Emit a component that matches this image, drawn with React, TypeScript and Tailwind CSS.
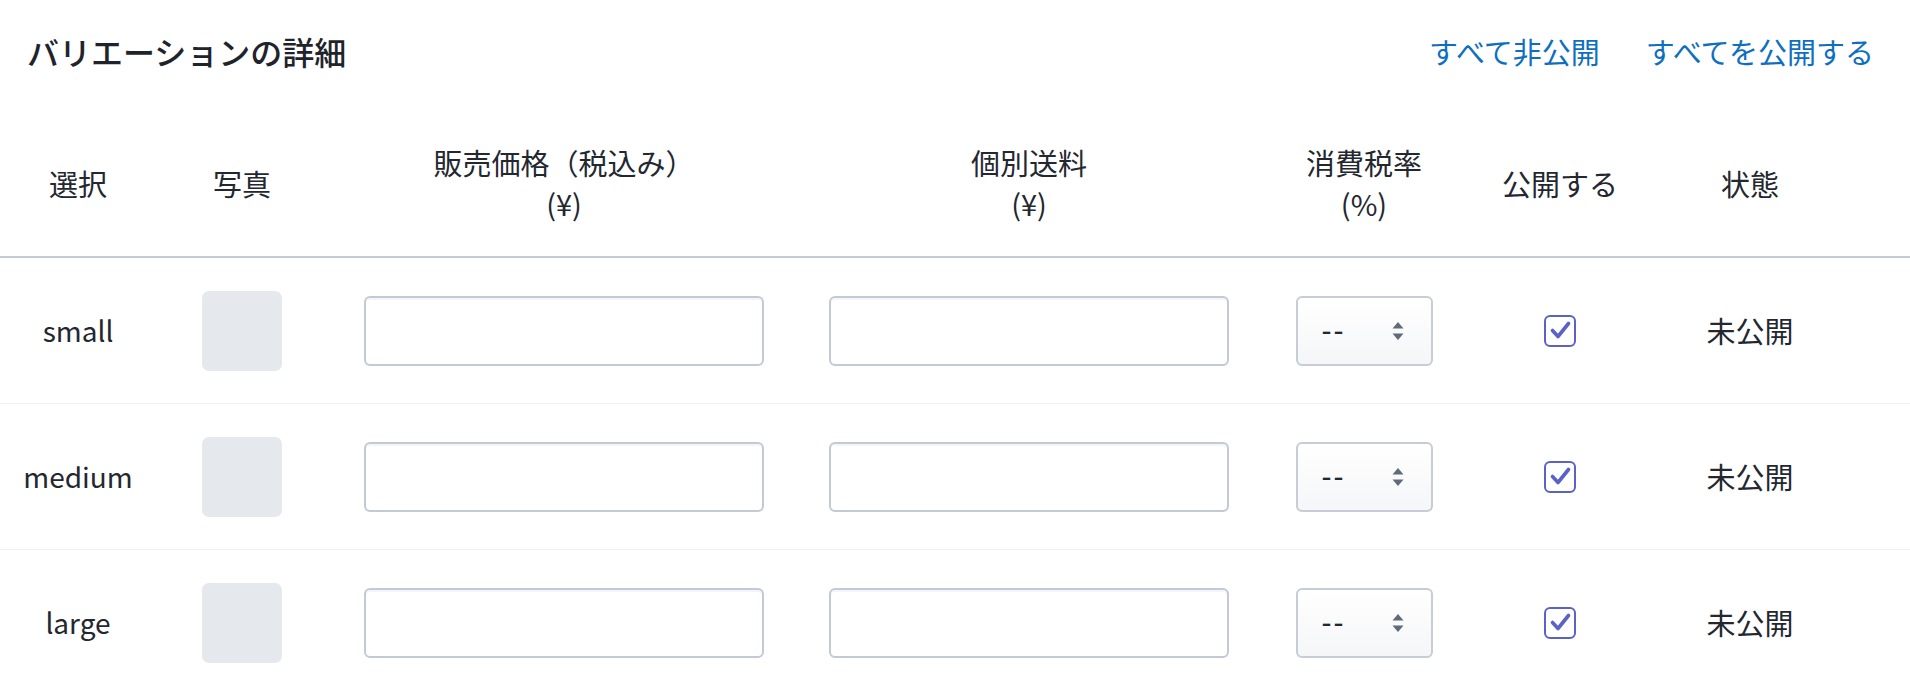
import React from 'react';

const variants = ['small', 'medium', 'large'];

const cols = {
  select: 'w-[156px]',
  photo: 'w-[172px]',
  price: 'w-[472px]',
  shipping: 'w-[458px]',
  tax: 'w-[212px]',
  publish: 'w-[180px]',
  status: 'w-[200px]',
};

const CheckIcon: React.FC = () => (
  <span className="flex h-[32px] w-[32px] items-center justify-center rounded-[6px] border-[2.5px] border-[#5a62c8] bg-white">
    <svg width="27" height="27" viewBox="0 0 27 27" fill="none">
      <path
        d="M5.5 13.5 L11 19.5 L21.5 6.5"
        stroke="#5a62c8"
        strokeWidth="3.6"
        strokeLinecap="round"
        strokeLinejoin="round"
      />
    </svg>
  </span>
);

const TaxSelect: React.FC = () => (
  <div className="flex h-[70px] w-[137px] items-center justify-between rounded-[6px] border-2 border-[#c6cdd7] bg-gradient-to-b from-white to-[#f5f6f8] pl-[24px] pr-[26px]">
    <span
      className="text-[30px] leading-none tracking-[2px] text-[#23272f]"
      style={{ fontFamily: '"Liberation Sans", sans-serif' }}
    >
      --
    </span>
    <svg width="14" height="20" viewBox="0 0 14 20">
      <path d="M7 1 L12.5 7.5 L1.5 7.5 Z" fill="#5f6b7a" />
      <path d="M1.5 12.5 L12.5 12.5 L7 19 Z" fill="#5f6b7a" />
    </svg>
  </div>
);

const TextBox: React.FC = () => (
  <input
    type="text"
    className="h-[70px] w-[400px] rounded-[6px] border-2 border-[#c3cad5] bg-white px-4 text-[28px] shadow-[inset_0_2px_0_#f3f5f8] outline-none"
  />
);

const VariantRow: React.FC<{ name: string }> = ({ name }) => (
  <div className="flex h-[146px] items-center border-b border-[#eef0f2]">
    <div className={`${cols.select} text-center text-[28px]`}>{name}</div>
    <div className={`${cols.photo} flex justify-center`}>
      <div className="h-[80px] w-[80px] rounded-[7px] bg-[#e5e8ec]" />
    </div>
    <div className={`${cols.price} flex justify-center`}>
      <TextBox />
    </div>
    <div className={`${cols.shipping} flex justify-center`}>
      <TextBox />
    </div>
    <div className={`${cols.tax} flex justify-center`}>
      <TaxSelect />
    </div>
    <div className={`${cols.publish} flex justify-center`}>
      <CheckIcon />
    </div>
    <div className={`${cols.status} text-center`}>未公開</div>
  </div>
);

export default function App() {
  return (
    <div
      className="min-h-screen overflow-hidden bg-white pt-[27px] text-[29px] leading-[41px] text-[#23272f]"
      style={{ fontFamily: '"Noto Sans CJK JP", "Noto Sans", sans-serif' }}
    >
      <div className="flex h-[48px] items-center justify-between pl-[27px] pr-[36px]">
        <h2 className="text-[32px] font-medium leading-[48px] text-[#1f242c]">バリエーションの詳細</h2>
        <div className="flex gap-[46px] text-[29px] text-[#0e6fbf]">
          <button type="button">すべて非公開</button>
          <button type="button">すべてを公開する</button>
        </div>
      </div>

      <div className="mt-[37px] flex h-[146px] items-center border-b-2 border-[#c6ccd5] pb-[2px]">
        <div className={`${cols.select} text-center`}>選択</div>
        <div className={`${cols.photo} text-center`}>写真</div>
        <div className={`${cols.price} text-center`}>
          販売価格（税込み）
          <br />
          (¥)
        </div>
        <div className={`${cols.shipping} text-center`}>
          個別送料
          <br />
          (¥)
        </div>
        <div className={`${cols.tax} text-center`}>
          消費税率
          <br />
          (%)
        </div>
        <div className={`${cols.publish} text-center`}>公開する</div>
        <div className={`${cols.status} text-center`}>状態</div>
      </div>

      {variants.map((v) => (
        <VariantRow key={v} name={v} />
      ))}
    </div>
  );
}
